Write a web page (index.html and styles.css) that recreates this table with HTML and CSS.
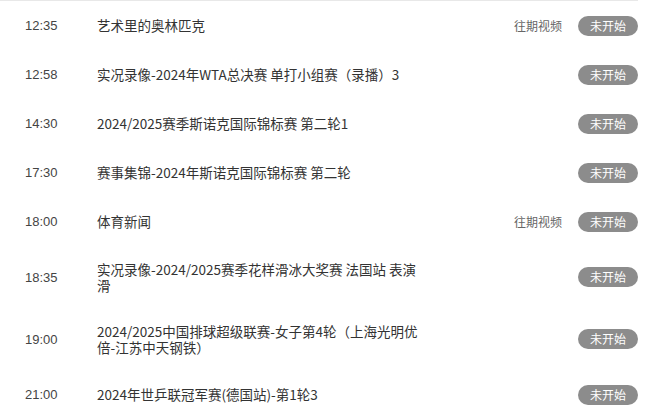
FILE: index.html
```html
<!DOCTYPE html>
<html lang="zh-CN">
<head>
<meta charset="utf-8">
<link rel="stylesheet" href="styles.css">
</head>
<body>
<ul class="schedule">
  <li class="row">
    <span class="time">12:35</span>
    <span class="title">艺术里的奥林匹克</span>
    <span class="replay">往期视频</span>
    <span class="badge">未开始</span>
  </li>
  <li class="row">
    <span class="time">12:58</span>
    <span class="title">实况录像-2024年WTA总决赛 单打小组赛（录播）3</span>
    <span class="badge">未开始</span>
  </li>
  <li class="row">
    <span class="time">14:30</span>
    <span class="title">2024/2025赛季斯诺克国际锦标赛 第二轮1</span>
    <span class="badge">未开始</span>
  </li>
  <li class="row">
    <span class="time">17:30</span>
    <span class="title">赛事集锦-2024年斯诺克国际锦标赛 第二轮</span>
    <span class="badge">未开始</span>
  </li>
  <li class="row">
    <span class="time">18:00</span>
    <span class="title">体育新闻</span>
    <span class="replay">往期视频</span>
    <span class="badge">未开始</span>
  </li>
  <li class="row">
    <span class="time">18:35</span>
    <span class="title">实况录像-2024/2025赛季花样滑冰大奖赛 法国站 表演滑</span>
    <span class="badge">未开始</span>
  </li>
  <li class="row">
    <span class="time">19:00</span>
    <span class="title">2024/2025中国排球超级联赛-女子第4轮（上海光明优倍-江苏中天钢铁）</span>
    <span class="badge">未开始</span>
  </li>
  <li class="row">
    <span class="time">21:00</span>
    <span class="title">2024年世乒联冠军赛(德国站)-第1轮3</span>
    <span class="badge">未开始</span>
  </li>
</ul>
</body>
</html>
```

FILE: styles.css
```css
html, body {
  margin: 0;
  padding: 0;
  background: #ffffff;
}

.schedule {
  list-style: none;
  margin: 0;
  padding: 0;
  width: 638px;
  border-top: 1px solid #e8e8e8;
}

.row {
  display: flex;
  align-items: center;
  padding: 14.5px 0;
}

.time {
  flex: 0 0 72px;
  padding-left: 25px;
  font-family: "Liberation Sans", Arial, sans-serif;
  font-size: 13px;
  color: #444444;
}

.title {
  flex: 0 0 328px;
  font-family: "Noto Sans CJK SC", "Liberation Sans", sans-serif;
  font-size: 13.5px;
  line-height: 16.5px;
  color: #333333;
}

.replay {
  margin-left: auto;
  margin-right: 16px;
  font-family: "Noto Sans CJK SC", sans-serif;
  font-size: 12px;
  color: #666666;
}

.badge {
  margin-left: auto;
  flex: 0 0 60px;
  height: 20px;
  border-radius: 10px;
  background: #8c8c8c;
  color: #ffffff;
  font-family: "Noto Sans CJK SC", sans-serif;
  font-size: 12px;
  line-height: 20px;
  text-align: center;
}

.replay + .badge {
  margin-left: 0;
}
```
